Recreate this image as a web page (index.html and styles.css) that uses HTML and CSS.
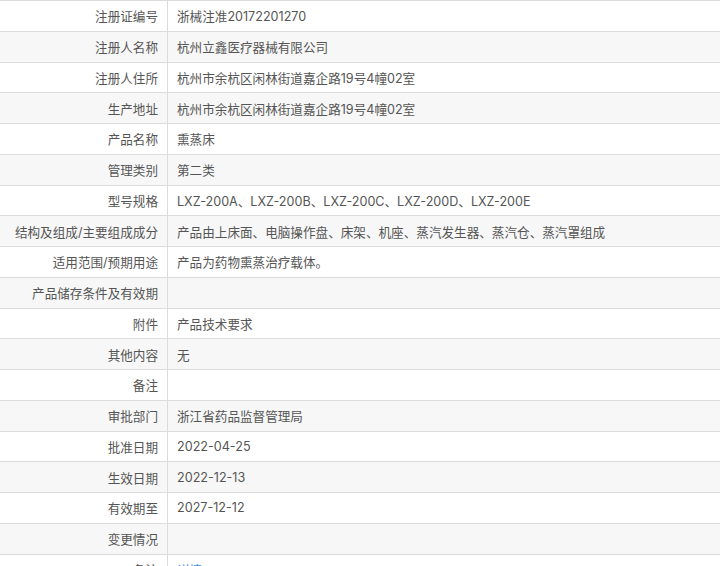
FILE: index.html
```html
<!DOCTYPE html>
<html lang="zh-CN">
<head>
<meta charset="utf-8">
<title>注册信息</title>
<link rel="stylesheet" href="styles.css">
</head>
<body>
<div class="info-table">
  <div class="row"><div class="label">注册证编号</div><div class="value">浙械注准20172201270</div></div>
  <div class="row alt"><div class="label">注册人名称</div><div class="value">杭州立鑫医疗器械有限公司</div></div>
  <div class="row"><div class="label">注册人住所</div><div class="value">杭州市余杭区闲林街道嘉企路19号4幢02室</div></div>
  <div class="row alt"><div class="label">生产地址</div><div class="value">杭州市余杭区闲林街道嘉企路19号4幢02室</div></div>
  <div class="row"><div class="label">产品名称</div><div class="value">熏蒸床</div></div>
  <div class="row alt"><div class="label">管理类别</div><div class="value">第二类</div></div>
  <div class="row"><div class="label">型号规格</div><div class="value">LXZ-200A、LXZ-200B、LXZ-200C、LXZ-200D、LXZ-200E</div></div>
  <div class="row alt"><div class="label">结构及组成/主要组成成分</div><div class="value">产品由上床面、电脑操作盘、床架、机座、蒸汽发生器、蒸汽仓、蒸汽罩组成</div></div>
  <div class="row"><div class="label">适用范围/预期用途</div><div class="value">产品为药物熏蒸治疗载体。</div></div>
  <div class="row alt"><div class="label">产品储存条件及有效期</div><div class="value"></div></div>
  <div class="row"><div class="label">附件</div><div class="value">产品技术要求</div></div>
  <div class="row alt"><div class="label">其他内容</div><div class="value">无</div></div>
  <div class="row"><div class="label">备注</div><div class="value"></div></div>
  <div class="row alt"><div class="label">审批部门</div><div class="value">浙江省药品监督管理局</div></div>
  <div class="row"><div class="label">批准日期</div><div class="value">2022-04-25</div></div>
  <div class="row alt"><div class="label">生效日期</div><div class="value">2022-12-13</div></div>
  <div class="row"><div class="label">有效期至</div><div class="value">2027-12-12</div></div>
  <div class="row alt"><div class="label">变更情况</div><div class="value"></div></div>
  <div class="row"><div class="label">备注</div><div class="value"><a class="link" href="#">详情</a></div></div>
</div>
</body>
</html>
```
FILE: styles.css
```css
html, body {
  margin: 0;
  padding: 0;
  overflow: hidden;
  background: #fff;
}
body {
  font-family: "Inter", "Noto Sans CJK SC", sans-serif;
  font-size: 12.6px;
  color: #555;
}
.info-table {
  border-top: 1px solid #dcdcdc;
  width: 100%;
}
.row {
  display: grid;
  grid-template-columns: 168px 1fr;
  height: 30.75px;
  box-sizing: border-box;
  border-bottom: 1px solid #dcdcdc;
  background: #fff;
}
.row.alt {
  background: #f7f7f7;
}
.label {
  display: flex;
  align-items: center;
  justify-content: flex-end;
  padding-right: 9px;
  border-right: 1px solid #dcdcdc;
  white-space: nowrap;
}
.value {
  display: flex;
  align-items: center;
  padding-left: 9px;
  white-space: nowrap;
}
.link {
  color: #3c8dde;
  text-decoration: none;
}
```
